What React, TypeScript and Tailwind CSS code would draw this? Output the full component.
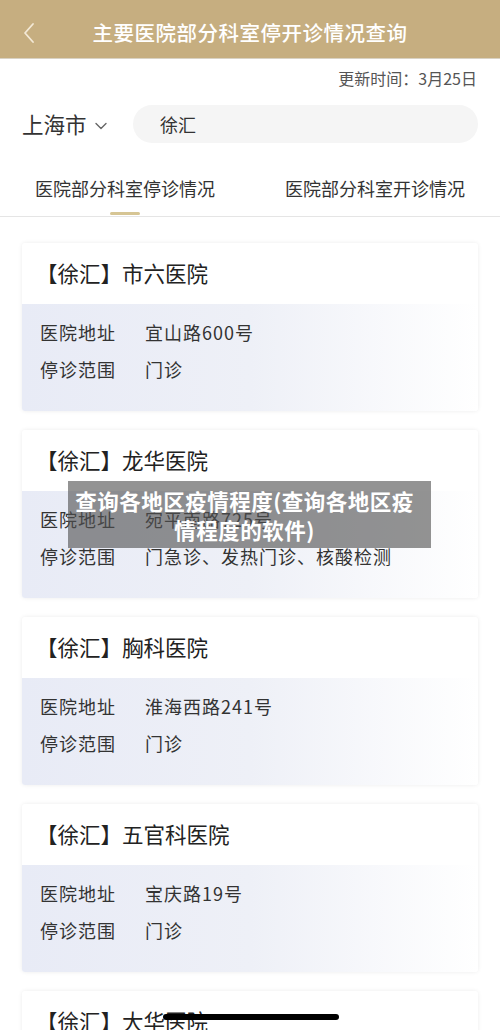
import React from 'react';

interface Hospital {
  name: string;
  address: string;
  scope: string;
}

const hospitals: Hospital[] = [
  { name: '市六医院', address: '宜山路600号', scope: '门诊' },
  { name: '龙华医院', address: '宛平南路725号', scope: '门急诊、发热门诊、核酸检测' },
  { name: '胸科医院', address: '淮海西路241号', scope: '门诊' },
  { name: '五官科医院', address: '宝庆路19号', scope: '门诊' },
  { name: '大华医院', address: '老沪闵路901号', scope: '门诊' },
];

const font = { fontFamily: '"Noto Sans CJK SC", "Noto Sans", sans-serif' };

const HospitalCard: React.FC<{ item: Hospital }> = ({ item }) => (
  <div className="h-[168px] shrink-0 overflow-hidden rounded-[3px] bg-white shadow-[0_0_4px_rgba(0,0,0,0.08)]">
    <div className="flex h-[61px] items-center pl-[14px] text-[21.5px] text-[#222]">
      【徐汇】{item.name}
    </div>
    <div className="h-[107px] bg-gradient-to-r from-[#e8ebf6] via-[#eef0f7] to-white px-[18px] pt-[10px] text-[18px] text-[#333]">
      <div className="flex h-[37px] items-center">
        <span className="w-[105px] tracking-[1px]">医院地址</span>
        <span className="tracking-[1px]">{item.address}</span>
      </div>
      <div className="flex h-[37px] items-center">
        <span className="w-[105px] tracking-[1px]">停诊范围</span>
        <span className="tracking-[1px]">{item.scope}</span>
      </div>
    </div>
  </div>
);

export default function App() {
  return (
    <div className="relative h-[1030px] w-[500px] overflow-hidden bg-white" style={font}>
      <div className="relative flex h-[59px] items-center justify-center bg-[#c6ae80] border-b border-[#d9d2c4] pt-[6px]">
        <svg className="absolute left-[22px] top-[21px]" width="14" height="24" viewBox="0 0 14 24" fill="none">
          <path d="M11 3 L3 12 L11 21" stroke="#f3e9d6" strokeWidth="1.8" strokeLinecap="round" strokeLinejoin="round" />
        </svg>
        <span className="text-[20.5px] font-medium text-white tracking-[0.5px]">主要医院部分科室停开诊情况查询</span>
      </div>

      <div className="flex justify-end pr-[23px] pt-[7px] text-[16px] text-[#555]">更新时间：3月25日</div>

      <div className="mt-[15px] flex items-center px-[22px]">
        <div className="flex w-[111px] items-center text-[21.5px] text-[#333]">
          上海市
          <svg className="ml-[8px] mt-[3px]" width="12" height="8" viewBox="0 0 12 8" fill="none">
            <path d="M1 1.5 L6 6.5 L11 1.5" stroke="#666" strokeWidth="1.4" strokeLinecap="round" strokeLinejoin="round" />
          </svg>
        </div>
        <div className="flex h-[38px] flex-1 items-center rounded-full bg-[#f5f5f5] pl-[27px] text-[18px] text-[#333]">徐汇</div>
      </div>

      <div className="mt-[32px] flex h-[42px] border-b border-[#e5e5e5]">
        <div className="relative flex flex-1 justify-center text-[18px] text-[#333]">
          医院部分科室停诊情况
          <span className="absolute bottom-[1px] left-[110px] h-[3px] w-[30px] rounded-full bg-[#d6c594]" />
        </div>
        <div className="flex flex-1 justify-center text-[18px] text-[#333]">医院部分科室开诊情况</div>
      </div>

      <div className="flex flex-col gap-[19px] px-[22px] pt-[26px]">
        {hospitals.map((h) => (
          <HospitalCard key={h.name} item={h} />
        ))}
      </div>

      <div className="absolute left-[68px] top-[481px] flex h-[67px] w-[363px] flex-col items-center justify-center bg-[rgba(80,80,80,0.62)] pr-[10px] text-center text-[21.5px] font-bold leading-[29px] tracking-[0.5px] text-white">
        <span>查询各地区疫情程度(查询各地区疫</span>
        <span>情程度的软件)</span>
      </div>

      <div className="absolute left-[163px] top-[1014px] h-[6px] w-[176px] rounded-full bg-black" />
    </div>
  );
}
